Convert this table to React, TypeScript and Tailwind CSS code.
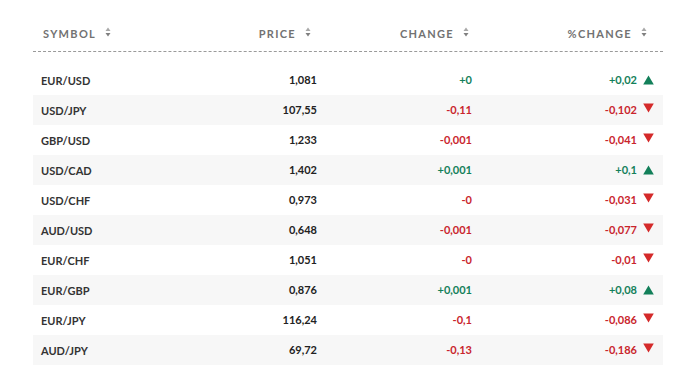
import { Fragment } from "react";

const rows = [
  { symbol: "EUR/USD", price: "1,081", change: "+0", pct: "+0,02", up: true },
  { symbol: "USD/JPY", price: "107,55", change: "-0,11", pct: "-0,102", up: false },
  { symbol: "GBP/USD", price: "1,233", change: "-0,001", pct: "-0,041", up: false },
  { symbol: "USD/CAD", price: "1,402", change: "+0,001", pct: "+0,1", up: true },
  { symbol: "USD/CHF", price: "0,973", change: "-0", pct: "-0,031", up: false },
  { symbol: "AUD/USD", price: "0,648", change: "-0,001", pct: "-0,077", up: false },
  { symbol: "EUR/CHF", price: "1,051", change: "-0", pct: "-0,01", up: false },
  { symbol: "EUR/GBP", price: "0,876", change: "+0,001", pct: "+0,08", up: true },
  { symbol: "EUR/JPY", price: "116,24", change: "-0,1", pct: "-0,086", up: false },
  { symbol: "AUD/JPY", price: "69,72", change: "-0,13", pct: "-0,186", up: false },
];

function SortIcon() {
  return (
    <svg width="6" height="10" viewBox="0 0 6 10" className="ml-[9px] mt-[1px]">
      <path d="M3 0.5 L5.5 4 H0.5 Z" fill="#a8a8a8" />
      <path d="M3 9.5 L5.5 6 H0.5 Z" fill="#808080" />
    </svg>
  );
}

function Arrow({ up }: { up: boolean }) {
  return up ? (
    <svg width="11" height="10" viewBox="0 0 11 10" className="ml-[6px]">
      <path d="M5.5 0.5 L10.8 9.5 H0.2 Z" fill="#13805a" />
    </svg>
  ) : (
    <svg width="11" height="10" viewBox="0 0 11 10" className="ml-[6px] -mt-[4px]">
      <path d="M0.2 0.5 H10.8 L5.5 9.5 Z" fill="#d42a2a" />
    </svg>
  );
}

export default function App() {
  return (
    <div
      className="w-[682px] h-[392px] bg-white pt-[26px] pl-[33px]"
      style={{ fontFamily: "Lato, 'Open Sans', Arial, sans-serif" }}
    >
      <div className="w-[630px]">
        {/* Header */}
        <div className="grid grid-cols-[180px_104px_156px_190px] h-[26px] border-b border-dashed border-[#9a9a9a] text-[11px] font-bold tracking-[0.12em] text-[#727272]">
          <div className="flex items-start pl-[10px]">
            SYMBOL
            <SortIcon />
          </div>
          <div className="flex items-start justify-end pr-[6px]">
            PRICE
            <SortIcon />
          </div>
          <div className="flex items-start justify-end pr-[4px]">
            CHANGE
            <SortIcon />
          </div>
          <div className="flex items-start justify-end pr-[16px]">
            %CHANGE
            <SortIcon />
          </div>
        </div>

        {/* Rows */}
        <div className="mt-[13px]">
          {rows.map((r, i) => (
            <div
              key={r.symbol}
              className={`grid grid-cols-[180px_104px_156px_190px] h-[30px] items-center text-[11px] font-bold ${
                i % 2 === 1 ? "bg-[#f7f7f7]" : "bg-white"
              }`}
            >
              <div className="pl-[8px] text-[#333] pt-[2px]">{r.symbol}</div>
              <div className="text-right text-[#222]">{r.price}</div>
              <div className={`text-right pr-[1px] ${r.up ? "text-[#13805a]" : "text-[#c9252c]"}`}>
                {r.change}
              </div>
              <div
                className={`flex items-center justify-end pr-[9px] ${
                  r.up ? "text-[#13805a]" : "text-[#c9252c]"
                }`}
              >
                <Fragment>
                  {r.pct}
                  <Arrow up={r.up} />
                </Fragment>
              </div>
            </div>
          ))}
        </div>
      </div>
    </div>
  );
}
